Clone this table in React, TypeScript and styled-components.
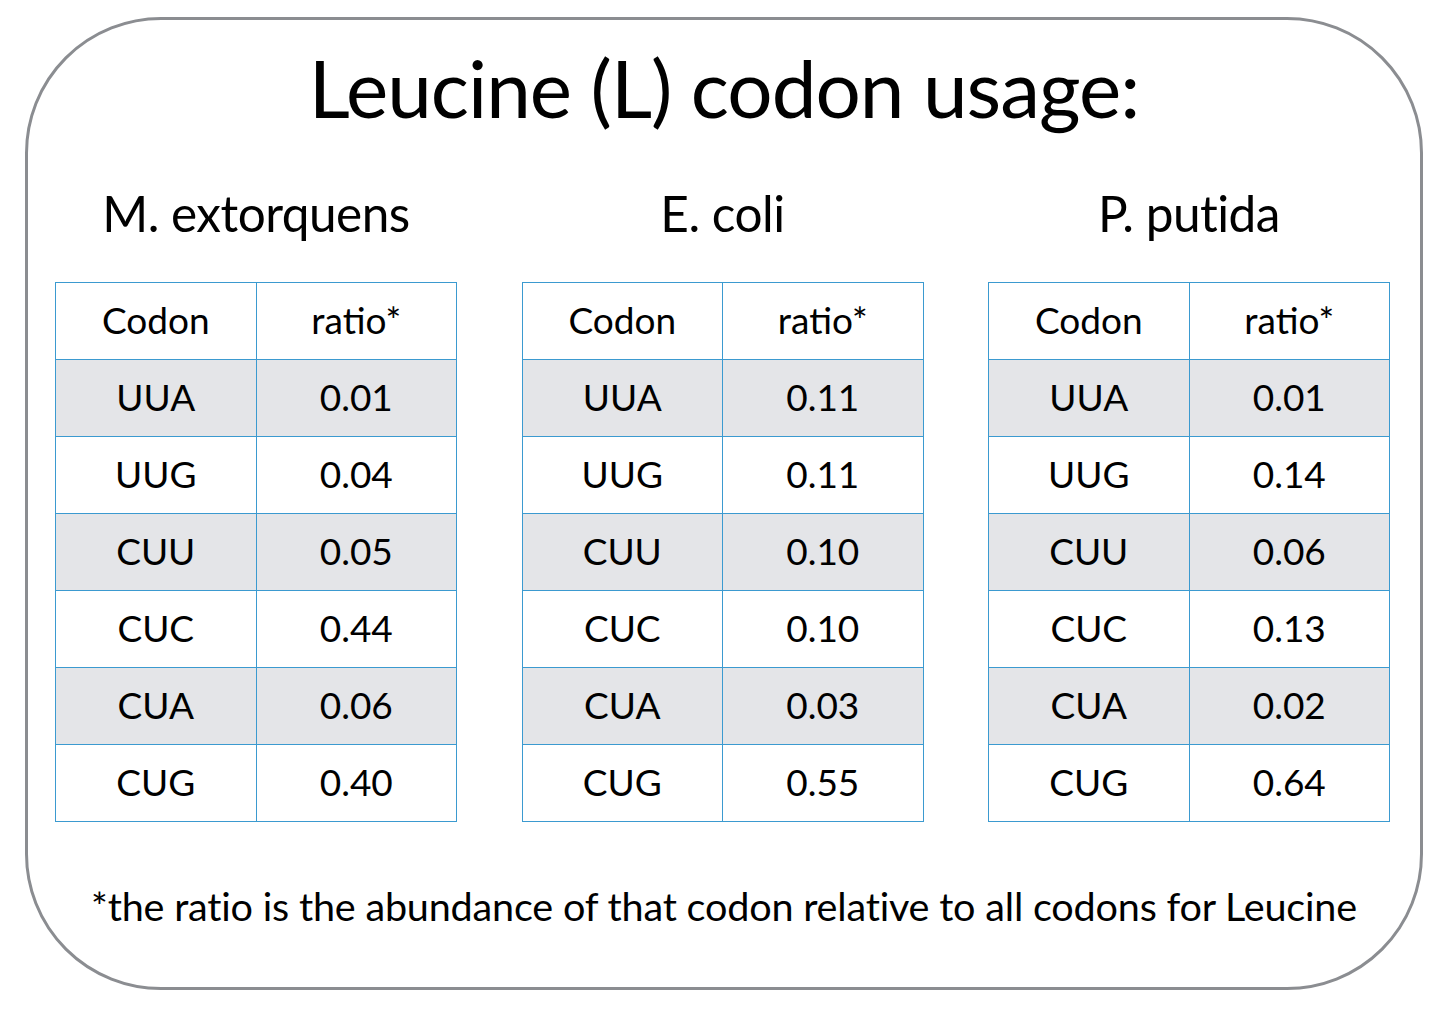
import React from "react";
import styled, { createGlobalStyle } from "styled-components";

const GlobalStyle = createGlobalStyle`
  html, body {
    margin: 0;
    padding: 0;
    background: #ffffff;
  }
  body {
    font-family: "Lato", "Open Sans", sans-serif;
    color: #000000;
  }
`;

const Page = styled.div`
  width: 1440px;
  height: 1016px;
  padding: 17px 0 0 25px;
  box-sizing: border-box;
`;

const Frame = styled.div`
  width: 1398px;
  height: 973px;
  box-sizing: border-box;
  border: 3px solid #8b8d91;
  border-radius: 136px;
  display: flex;
  flex-direction: column;
  align-items: center;
`;

const Title = styled.h1`
  margin: 17px 0 0;
  font-size: 80px;
  font-weight: 400;
  line-height: 100px;
  letter-spacing: -1px;
`;

const Columns = styled.div`
  display: grid;
  grid-template-columns: repeat(3, 402px);
  column-gap: 64.5px;
  margin-top: 46px;
  margin-left: -3px;
`;

const Species = styled.section`
  display: flex;
  flex-direction: column;
  align-items: center;
`;

const SpeciesName = styled.h2`
  margin: 0;
  font-size: 49.5px;
  font-weight: 400;
  line-height: 60px;
  letter-spacing: -0.5px;
`;

const Table = styled.table`
  margin-top: 39px;
  width: 402px;
  border-collapse: collapse;
  table-layout: fixed;
`;

const Row = styled.tr<{ $shaded: boolean }>`
  background: ${(p) => (p.$shaded ? "#e4e5e8" : "#ffffff")};
`;

const Cell = styled.td`
  height: 72px;
  padding: 0 0 4px;
  border: 1.5px solid #3b9ad0;
  text-align: center;
  font-size: 37px;
  font-weight: 400;
  line-height: 1;
`;

const HeadCell = styled(Cell).attrs({ as: "th" })`
  font-weight: 400;
`;

const Footnote = styled.p`
  margin: 59px 0 0;
  font-size: 39.6px;
  font-weight: 400;
  line-height: 50px;
  letter-spacing: -0.2px;
`;

type CodonRow = [string, string];

const species: { name: string; rows: CodonRow[] }[] = [
  {
    name: "M. extorquens",
    rows: [
      ["UUA", "0.01"],
      ["UUG", "0.04"],
      ["CUU", "0.05"],
      ["CUC", "0.44"],
      ["CUA", "0.06"],
      ["CUG", "0.40"],
    ],
  },
  {
    name: "E. coli",
    rows: [
      ["UUA", "0.11"],
      ["UUG", "0.11"],
      ["CUU", "0.10"],
      ["CUC", "0.10"],
      ["CUA", "0.03"],
      ["CUG", "0.55"],
    ],
  },
  {
    name: "P. putida",
    rows: [
      ["UUA", "0.01"],
      ["UUG", "0.14"],
      ["CUU", "0.06"],
      ["CUC", "0.13"],
      ["CUA", "0.02"],
      ["CUG", "0.64"],
    ],
  },
];

const App = () => {
  return (
    <Page>
      <GlobalStyle />
      <Frame>
        <Title>Leucine (L) codon usage:</Title>
        <Columns>
          {species.map((s) => (
            <Species key={s.name}>
              <SpeciesName>{s.name}</SpeciesName>
              <Table>
                <thead>
                  <Row $shaded={false}>
                    <HeadCell>Codon</HeadCell>
                    <HeadCell>ratio*</HeadCell>
                  </Row>
                </thead>
                <tbody>
                  {s.rows.map(([codon, ratio], i) => (
                    <Row key={codon} $shaded={i % 2 === 0}>
                      <Cell>{codon}</Cell>
                      <Cell>{ratio}</Cell>
                    </Row>
                  ))}
                </tbody>
              </Table>
            </Species>
          ))}
        </Columns>
        <Footnote>*the ratio is the abundance of that codon relative to all codons for Leucine</Footnote>
      </Frame>
    </Page>
  );
};

export default App;
